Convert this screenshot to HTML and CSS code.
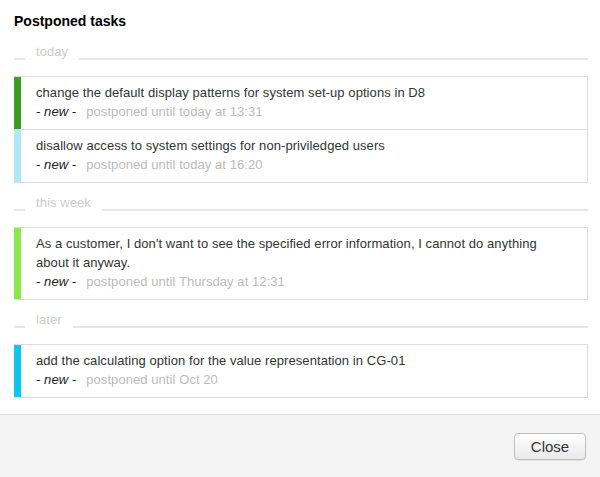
FILE: index.html
```html
<!DOCTYPE html>
<html>
<head>
<meta charset="utf-8">
<link rel="stylesheet" href="styles.css">
</head>
<body>
<div class="dialog">
  <div class="content">
    <h1 class="title">Postponed tasks</h1>

    <div class="section-head"><span class="dash"></span><span class="label">today</span><span class="rule"></span></div>
    <div class="cards">
      <div class="card c-green">
        <div class="name">change the default display patterns for system set-up options in D8</div>
        <div class="meta"><span class="status">- new -</span><span class="when">postponed until today at 13:31</span></div>
      </div>
      <div class="card c-lightblue">
        <div class="name">disallow access to system settings for non-priviledged users</div>
        <div class="meta"><span class="status">- new -</span><span class="when">postponed until today at 16:20</span></div>
      </div>
    </div>

    <div class="section-head"><span class="dash"></span><span class="label">this week</span><span class="rule"></span></div>
    <div class="cards">
      <div class="card c-lime">
        <div class="name">As a customer, I don't want to see the specified error information, I cannot do anything about it anyway.</div>
        <div class="meta"><span class="status">- new -</span><span class="when">postponed until Thursday at 12:31</span></div>
      </div>
    </div>

    <div class="section-head"><span class="dash"></span><span class="label">later</span><span class="rule"></span></div>
    <div class="cards">
      <div class="card c-cyan">
        <div class="name">add the calculating option for the value representation in CG-01</div>
        <div class="meta"><span class="status">- new -</span><span class="when">postponed until Oct 20</span></div>
      </div>
    </div>
  </div>
  <div class="footer">
    <button class="btn">Close</button>
  </div>
</div>
</body>
</html>
```
FILE: styles.css
```css
html, body {
  margin: 0;
  padding: 0;
  background: #fff;
}
body {
  font-family: "Liberation Sans", Arial, sans-serif;
  font-size: 13px;
  color: #333;
  letter-spacing: 0.07px;
}
.dialog {
  width: 600px;
  height: 477px;
  display: flex;
  flex-direction: column;
}
.content {
  padding: 0 12px 16px 14px;
}
.title {
  font-size: 14px;
  font-weight: bold;
  color: #000;
  margin: 0;
  padding-top: 13px;
  line-height: 17px;
  letter-spacing: 0;
}
.section-head {
  display: flex;
  align-items: flex-end;
  margin-top: 14px;
  height: 17px;
  margin-bottom: 15px;
}
.cards + .section-head {
  margin-top: 12px;
}
.section-head .dash {
  width: 11px;
  border-bottom: 2px solid #e6e6e6;
  margin-bottom: 1px;
}
.section-head .label {
  color: #ccc;
  padding: 0 11px 0 11px;
  line-height: 16px;
  margin-bottom: 1px;
}
.section-head .rule {
  flex: 1;
  border-bottom: 2px solid #e6e6e6;
  margin-bottom: 1px;
}
.cards {
  border: 1px solid #dcdcdc;
  border-left: none;
}
.card {
  border-left: 7px solid #ccc;
  padding: 6px 20px 8px 15px;
  line-height: 19px;
}
.card + .card {
  border-top: 1px solid #dcdcdc;
}
.c-green { border-left-color: #3f9c22; }
.c-lightblue { border-left-color: #b0e7f8; }
.c-lime { border-left-color: #8de64b; }
.c-cyan { border-left-color: #10c6ef; }
.meta .status {
  font-style: italic;
  color: #222;
  margin-right: 10px;
}
.meta .when {
  color: #bbb;
}
.footer {
  flex: 1;
  background: #f4f4f4;
  border-top: 1px solid #dedede;
  display: flex;
  justify-content: flex-end;
  align-items: flex-start;
  padding: 18px 14px 0 0;
}
.btn {
  width: 72px;
  height: 27px;
  font-family: "Liberation Sans", Arial, sans-serif;
  font-size: 15px;
  color: #333;
  background: linear-gradient(#ffffff, #e9e9e9);
  border: 1px solid #bdbdbd;
  border-radius: 4px;
  box-shadow: 0 1px 1px rgba(0,0,0,0.08);
  padding: 0;
}
```
